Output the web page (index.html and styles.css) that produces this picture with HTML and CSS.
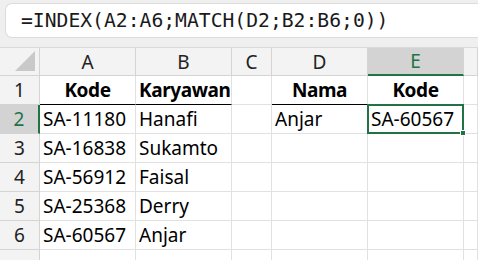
FILE: index.html
```html
<!DOCTYPE html>
<html lang="en">
<head>
    <meta charset="UTF-8">
    <title>INDEX MATCH</title>
    <link rel="stylesheet" href="styles.css">
</head>
<body>
    <div class="formula-area">
        <div class="formula-bar">=INDEX(A2:A6;MATCH(D2;B2:B6;0))</div>
    </div>

    <div class="sheet">
        <!-- column headers -->
        <div class="corner"><span class="corner-tri"></span></div>
        <div class="col-head">A</div>
        <div class="col-head">B</div>
        <div class="col-head">C</div>
        <div class="col-head">D</div>
        <div class="col-head active">E</div>
        <div class="col-head"></div>

        <!-- row 1 -->
        <div class="row-head">1</div>
        <div class="cell bold center line-under">Kode</div>
        <div class="cell bold line-under">Karyawan</div>
        <div class="cell"></div>
        <div class="cell bold center line-under">Nama</div>
        <div class="cell bold center">Kode</div>
        <div class="cell"></div>

        <!-- row 2 -->
        <div class="row-head active">2</div>
        <div class="cell">SA-11180</div>
        <div class="cell">Hanafi</div>
        <div class="cell"></div>
        <div class="cell">Anjar</div>
        <div class="cell selected">SA-60567<span class="handle"></span></div>
        <div class="cell"></div>

        <!-- row 3 -->
        <div class="row-head">3</div>
        <div class="cell">SA-16838</div>
        <div class="cell">Sukamto</div>
        <div class="cell"></div>
        <div class="cell"></div>
        <div class="cell"></div>
        <div class="cell"></div>

        <!-- row 4 -->
        <div class="row-head">4</div>
        <div class="cell">SA-56912</div>
        <div class="cell">Faisal</div>
        <div class="cell"></div>
        <div class="cell"></div>
        <div class="cell"></div>
        <div class="cell"></div>

        <!-- row 5 -->
        <div class="row-head">5</div>
        <div class="cell">SA-25368</div>
        <div class="cell">Derry</div>
        <div class="cell"></div>
        <div class="cell"></div>
        <div class="cell"></div>
        <div class="cell"></div>

        <!-- row 6 -->
        <div class="row-head">6</div>
        <div class="cell">SA-60567</div>
        <div class="cell">Anjar</div>
        <div class="cell"></div>
        <div class="cell"></div>
        <div class="cell"></div>
        <div class="cell"></div>

        <!-- row 7 (cut off by the window) -->
        <div class="row-head"></div>
        <div class="cell"></div>
        <div class="cell"></div>
        <div class="cell"></div>
        <div class="cell"></div>
        <div class="cell"></div>
        <div class="cell"></div>
    </div>
</body>
</html>
```

FILE: styles.css
```css
:root {
    --grid-line: #e1e1e1;
    --head-bg: #f3f3f3;
    --head-active: #d3d3d3;
    --excel-green: #217346;
    --text: #000000;
}

* { box-sizing: border-box; margin: 0; padding: 0; }

body {
    width: 478px;
    height: 261px;
    overflow: hidden;
    background: #ffffff;
    font-family: "Noto Sans", sans-serif;
    color: var(--text);
}

/* Formula bar strip */
.formula-area {
    height: 48px;
    padding: 3px 0 0 5px;
    background: #efefef;
    border-bottom: 1px solid #d9d9d9;
}

.formula-bar {
    height: 35px;
    padding-left: 15px;
    background: #ffffff;
    border: 1px solid #dcdcdc;
    border-right: none;
    border-radius: 7px 0 0 7px;
    font-family: "DejaVu Sans Mono", monospace;
    font-size: 19.7px;
    line-height: 33px;
    color: #1a1a1a;
}

/* Sheet grid */
.sheet {
    display: grid;
    grid-template-columns: 40px 96px 96px 40px 96px 96px 1fr;
    grid-template-rows: 28px repeat(6, 29px) 11px;
    height: 212px;
    overflow: hidden;
}

.corner,
.col-head,
.row-head {
    background: var(--head-bg);
    border-right: 1px solid #d4d4d4;
    border-bottom: 1px solid #d4d4d4;
    color: #222222;
    font-size: 19px;
    display: flex;
    align-items: center;
    justify-content: center;
}

.corner { position: relative; }

.corner-tri {
    position: absolute;
    right: 4px;
    bottom: 4px;
    width: 0;
    height: 0;
    border-left: 20px solid transparent;
    border-bottom: 20px solid #c9c9c9;
}

.col-head.active {
    background: var(--head-active);
    color: var(--excel-green);
    border-bottom: 2px solid var(--excel-green);
}

.row-head.active {
    background: var(--head-active);
    color: var(--excel-green);
    border-right: 2px solid var(--excel-green);
}

.cell {
    border-right: 1px solid var(--grid-line);
    border-bottom: 1px solid var(--grid-line);
    font-size: 19px;
    line-height: 28px;
    padding-left: 3px;
    white-space: nowrap;
}

.bold { font-weight: 700; letter-spacing: -0.4px; }
.center { text-align: center; padding-left: 0; }
.line-under { border-bottom: 1px solid #000000; }

.selected {
    position: relative;
    border: 2px solid var(--excel-green);
    margin: -1px 0 0 -1px;
    padding-left: 2px;
    line-height: 26px;
}

.handle {
    position: absolute;
    right: -4px;
    bottom: -4px;
    width: 6px;
    height: 6px;
    background: var(--excel-green);
    border: 1px solid #ffffff;
}
```
